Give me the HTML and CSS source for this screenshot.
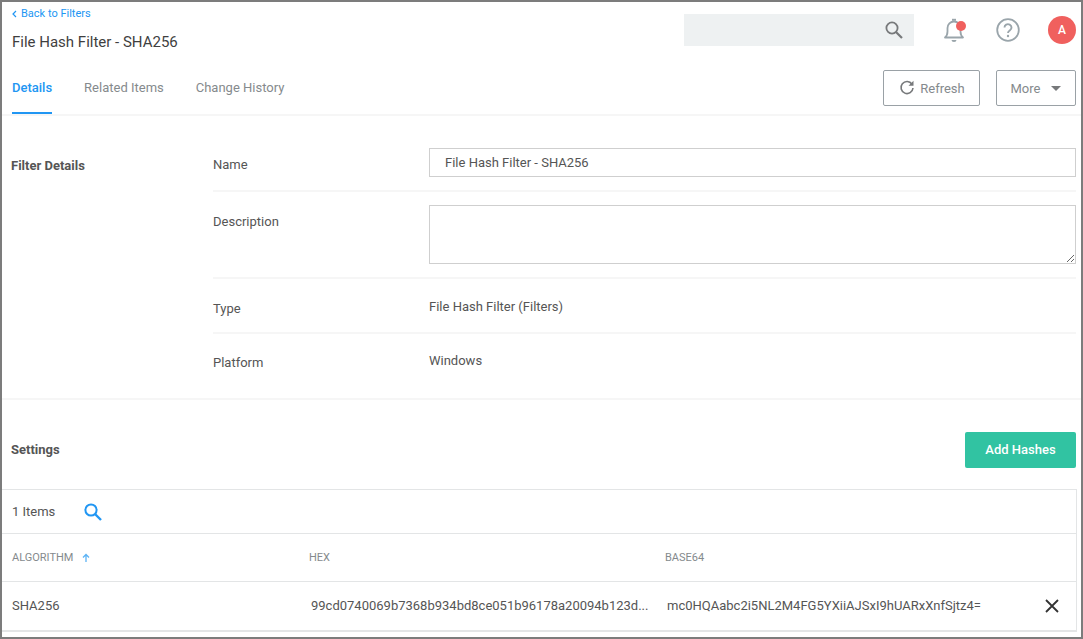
FILE: index.html
```html
<!DOCTYPE html>
<html lang="en">
<head>
<meta charset="utf-8">
<title>File Hash Filter - SHA256</title>
<link rel="stylesheet" href="styles.css">
</head>
<body>
<div class="frame">
  <header class="top">
    <div class="crumbs">
      <a class="back" href="#"><svg class="chev" width="5" height="8" viewBox="0 0 5 8"><path d="M4 1 1 4l3 3" fill="none" stroke="#2196f3" stroke-width="1.2"/></svg>Back to Filters</a>
      <h1 class="title">File Hash Filter - SHA256</h1>
    </div>
    <div class="tools">
      <div class="search">
        <svg width="20" height="20" viewBox="0 0 20 20"><circle cx="8" cy="8" r="5.6" fill="none" stroke="#77797b" stroke-width="1.8"/><path d="M12 12l6 6" stroke="#77797b" stroke-width="2.2" fill="none"/></svg>
      </div>
      <span class="bell">
        <svg width="24" height="26" viewBox="0 0 24 26"><path d="M3 20.5c1.8-1.5 2.5-3 2.5-6V11a6.5 6.5 0 0 1 13 0v3.500c0 3 .7 4.500 2.500 6z" fill="none" stroke="#9aa5ab" stroke-width="1.8" stroke-linejoin="round"/><path d="M10 1.800h4v2h-4z" fill="#9aa5ab"/><path d="M9.500 23h5a2.500 2 0 0 1-5 0z" fill="#9aa5ab"/></svg>
        <i class="dot"></i>
      </span>
      <svg class="help" width="24" height="24" viewBox="0 0 24 24"><circle cx="12" cy="12" r="10.800" fill="none" stroke="#9aa5ab" stroke-width="1.800"/><path d="M8.500 9.500a3.500 3.300 0 1 1 5.500 2.700c-1.300.9-2 1.400-2 2.800" fill="none" stroke="#9aa5ab" stroke-width="1.900"/><circle cx="12" cy="18" r="1.200" fill="#9aa5ab"/></svg>
      <span class="avatar">A</span>
    </div>
  </header>

  <div class="tabbar">
    <nav class="tabs">
      <a class="tab active" href="#">Details</a>
      <a class="tab" href="#">Related Items</a>
      <a class="tab" href="#">Change History</a>
    </nav>
    <div class="actions">
      <button class="btn refresh" type="button"><svg width="16" height="16" viewBox="0 0 16 16"><path d="M13 4.200A6 6 0 1 0 14 8" fill="none" stroke="#77797b" stroke-width="1.600"/><path d="M14.500 .8v5h-5z" fill="#77797b"/></svg>Refresh</button>
      <button class="btn more" type="button">More<i class="caret"></i></button>
    </div>
  </div>

  <section class="details">
    <h2 class="section-title">Filter Details</h2>
    <div class="fields">
      <div class="field f-name"><span class="label">Name</span><input class="input" type="text" value="File Hash Filter - SHA256"></div>
      <div class="field f-desc"><span class="label">Description</span><textarea class="textarea"></textarea></div>
      <div class="field f-type"><span class="label">Type</span><span class="value">File Hash Filter (Filters)</span></div>
      <div class="field f-plat"><span class="label">Platform</span><span class="value">Windows</span></div>
    </div>
  </section>

  <div class="settings">
    <h2 class="section-title">Settings</h2>
    <button class="add" type="button">Add Hashes</button>
  </div>

  <div class="table">
    <div class="toolbar">
      <span class="count">1 Items</span>
      <svg width="20" height="20" viewBox="0 0 20 20"><circle cx="8" cy="8" r="5.600" fill="none" stroke="#2196f3" stroke-width="2"/><path d="M12 12l6 6" stroke="#2196f3" stroke-width="2.400" fill="none"/></svg>
    </div>
    <div class="row head">
      <span class="c1">ALGORITHM<svg class="sort" width="8" height="9" viewBox="0 0 8 9"><path d="M4 9V2M1 4.500 4 1.500l3 3" fill="none" stroke="#5cb3f5" stroke-width="1.300"/></svg></span>
      <span class="c2">HEX</span>
      <span class="c3">BASE64</span>
    </div>
    <div class="row body">
      <span class="c1">SHA256</span>
      <span class="c2 cell-hex">99cd0740069b7368b934bd8ce051b96178a20094b123d...</span>
      <span class="c3 cell-b64">mc0HQAabc2i5NL2M4FG5YXiiAJSxI9hUARxXnfSjtz4=</span>
      <svg class="close" width="16" height="16" viewBox="0 0 16 16"><path d="M2 2l12 12M14 2 2 14" stroke="#333" stroke-width="1.800" fill="none"/></svg>
    </div>
  </div>
</div>
</body>
</html>
```
FILE: styles.css
```css
* { box-sizing: border-box; }
html, body { margin: 0; padding: 0; }
body { font-family: Roboto, "Liberation Sans", sans-serif; font-size: 13px; color: #555; background: #fff; }
.frame { width: 1083px; height: 639px; border: 2px solid #7c7c7c; overflow: hidden; background: #fff; }

.top { display: flex; justify-content: space-between; height: 66px; padding: 12px 5px 0 10px; }
.crumbs { display: flex; flex-direction: column; }
.back { display: flex; align-items: center; gap: 4px; color: #2196f3; font-size: 11px; line-height: 0; height: 0; text-decoration: none; }
.chev { display: block; }
.title { margin: 0; padding-top: 19px; font-size: 15px; line-height: 18px; font-weight: 400; color: #3f3f3f; }
.tools { display: flex; align-items: flex-start; }
.search { width: 230px; height: 32px; background: #eef1f2; display: flex; align-items: center; justify-content: flex-end; padding-right: 10px; }
.bell { position: relative; display: block; width: 24px; height: 26px; margin: 3px 0 0 28px; }
.bell svg { display: block; }
.dot { position: absolute; top: 4px; right: 0; width: 10px; height: 10px; border-radius: 50%; background: #f0605e; }
.help { display: block; margin: 4px 0 0 30px; }
.avatar { width: 28px; height: 28px; margin: 2px 0 0 28px; border-radius: 50%; background: #f0605e; color: #fff; font-size: 12px; font-weight: 500; display: flex; align-items: center; justify-content: center; }

.tabbar { display: flex; justify-content: space-between; height: 48px; padding: 2px 5px 0 10px; border-bottom: 2px solid #f6f6f6; }
.tabs { display: flex; gap: 32px; }
.tab { display: block; height: 44px; padding-top: 9px; line-height: 18px; color: #858a8d; text-decoration: none; font-size: 13px; }
.tab.active { color: #2196f3; font-weight: 500; border-bottom: 2px solid #2196f3; }
.actions { display: flex; gap: 16px; }
.btn { height: 36px; background: #fff; border: 1px solid #9aa1a6; border-radius: 2px; color: #858a8d; font: 13px Roboto, sans-serif; display: flex; align-items: center; justify-content: center; padding: 0; }
.refresh { width: 97px; gap: 5px; padding-left: 1px; }
.more { width: 80px; gap: 11px; }
.caret { width: 0; height: 0; border-left: 5px solid transparent; border-right: 5px solid transparent; border-top: 5px solid #77797b; }

.details { display: flex; height: 284px; border-bottom: 2px solid #f6f6f6; }
.section-title { margin: 0; font-size: 13px; font-weight: 700; color: #555; line-height: 16px; }
.details .section-title { width: 211px; padding: 42px 0 0 9px; }
.fields { flex: 1; padding-right: 5px; }
.field { display: flex; border-bottom: 2px solid #f6f6f6; }
.label { width: 216px; flex: none; color: #555; line-height: 16px; }
.value { color: #555; line-height: 16px; }
.f-name { height: 76px; padding-top: 32px; }
.f-name .label { padding-top: 9px; }
.f-desc { height: 87px; padding-top: 13px; }
.f-desc .label { padding-top: 9px; }
.f-type { height: 55px; padding-top: 20px; }
.f-type .label { padding-top: 2px; }
.f-plat { height: 55px; padding-top: 19px; border-bottom: 0; }
.f-plat .label { padding-top: 2px; }
.input { flex: 1; height: 29px; border: 1px solid #cfcfcf; padding: 0 15px; font: 13px Roboto, sans-serif; color: #555; outline: 0; min-width: 0; }
.textarea { flex: 1; height: 59px; border: 1px solid #cfcfcf; padding: 4px 15px; font: 13px Roboto, sans-serif; outline: 0; min-width: 0; resize: vertical; display: block; }

.settings { display: flex; justify-content: space-between; height: 89px; padding: 32px 5px 0 9px; }
.settings .section-title { padding-top: 10px; }
.add { width: 111px; height: 36px; background: #31c3a2; border: 0; border-radius: 2px; color: #fff; font: 500 13px Roboto, sans-serif; padding: 0 0 2px; }

.table { width: 1075px; border: 1px solid #e3e5e6; border-left: 0; }
.toolbar { height: 44px; display: flex; align-items: center; gap: 28px; padding-left: 10px; border-bottom: 1px solid #e3e5e6; color: #555; }
.toolbar svg { display: block; margin-top: 1px; }
.count { width: 44px; white-space: nowrap; margin-right: -1px; }
.row { position: relative; display: grid; grid-template-columns: 297px 356px 1fr; align-items: center; padding-left: 10px; border-bottom: 1px solid #e3e5e6; }
.head { height: 48px; font-size: 11px; color: #858a8d; }
.body { height: 49px; padding-bottom: 1px; font-size: 13px; color: #555; }
.sort { margin-left: 9px; vertical-align: -1px; }
.cell-hex { padding-left: 2px; white-space: nowrap; overflow: hidden; }
.cell-b64 { padding-left: 2px; white-space: nowrap; }
.close { position: absolute; right: 16px; top: 16px; display: block; }
```
